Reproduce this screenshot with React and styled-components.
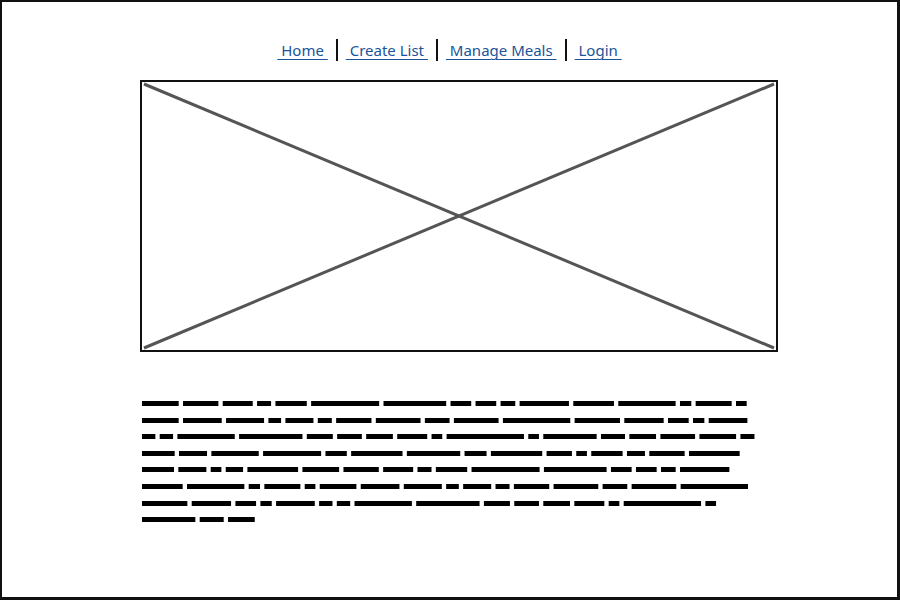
import React from "react";
import styled, { createGlobalStyle } from "styled-components";

const Global = createGlobalStyle`
  html, body { margin: 0; padding: 0; background: #fff; }
  body { font-family: "Noto Sans", "Liberation Sans", sans-serif; }
`;

const Page = styled.div`
  box-sizing: border-box;
  width: 900px;
  height: 600px;
  border: 2px solid #111;
  border-right-width: 3px;
  border-bottom-width: 3px;
  background: #fff;
  display: flex;
  flex-direction: column;
  padding-top: 36px;
`;

const Nav = styled.nav`
  align-self: center;
  display: flex;
  align-items: center;
  height: 24px;
`;

const NavLink = styled.a`
  color: #1a5499;
  font-size: 15px;
  text-decoration: underline;
  text-decoration-thickness: 1px;
  text-underline-offset: 3px;
  white-space: pre;
  padding: 0 8px;
  cursor: pointer;
`;

const Sep = styled.span`
  width: 2px;
  height: 22px;
  background: #111;
`;

const Body = styled.main`
  padding-left: 138px;
  display: flex;
  flex-direction: column;
`;

const Placeholder = styled.div`
  box-sizing: border-box;
  width: 638px;
  height: 272px;
  margin-top: 18px;
  border: 2px solid #111;
  svg { display: block; width: 100%; height: 100%; }
`;

const Para = styled.p`
  width: 616px;
  margin: 43px 0 0 2px;
  font-family: "Liberation Sans", sans-serif;
  font-size: 12px;
  font-weight: bold;
  line-height: 16.6px;
  word-spacing: 1px;
  color: transparent;
`;

const Word = styled.span`
  text-decoration: underline solid #000;
  text-decoration-thickness: 5px;
  text-underline-offset: -6px;
  text-decoration-skip-ink: none;
`;

const LOREM =
  "Lorem ipsum dolor sit amet, consectetur adipisicing elit, sed do eiusmod tempor incididunt ut labore et dolore magna aliqua. Ut enim ad minim veniam, quis nostrud exercitation ullamco laboris nisi ut aliquip ex ea commodo consequat. Duis aute irure dolor in reprehenderit in voluptate velit esse cillum dolore eu fugiat nulla pariatur. Excepteur sint occaecat cupidatat non proident, sunt in culpa qui officia deserunt mollit anim id est laborum. Lorem ipsum dolor sit amet, consectetur adipisicing elit, sed do eiusmod tempor incididunt ut labore et dolore magna aliqua. Ut enim ad minim veniam, quis nostrud exercitation ullamco laboris nisi ut aliquip ex ea commodo consequat. Duis aute irure dolor in reprehenderit in voluptate velit esse";

const links = [" Home ", " Create List ", " Manage Meals ", " Login "];

export default function App() {
  const words = LOREM.split(" ");
  return (
    <>
      <Global />
      <Page>
        <Nav>
          {links.map((l, i) => (
            <React.Fragment key={l}>
              {i > 0 && <Sep />}
              <NavLink>{l}</NavLink>
            </React.Fragment>
          ))}
        </Nav>
        <Body>
          <Placeholder>
            <svg viewBox="0 0 634 268" preserveAspectRatio="none">
              <line x1="2" y1="2" x2="632" y2="266" stroke="#555" strokeWidth="3" />
              <line x1="632" y1="2" x2="2" y2="266" stroke="#555" strokeWidth="3" />
            </svg>
          </Placeholder>
          <Para>
            {words.map((w, i) => (
              <React.Fragment key={i}>
                <Word>{w}</Word>{" "}
              </React.Fragment>
            ))}
          </Para>
        </Body>
      </Page>
    </>
  );
}
